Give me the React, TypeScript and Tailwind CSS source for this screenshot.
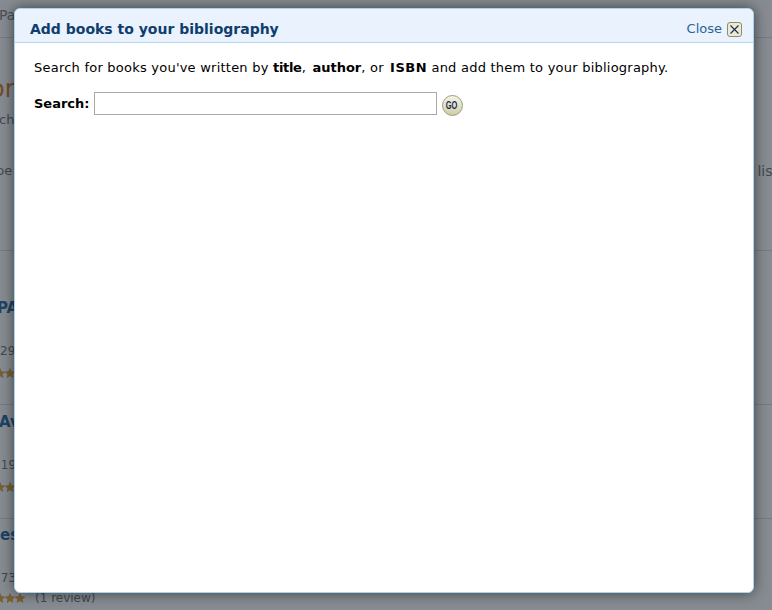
const font = "font-['DejaVu_Sans',Verdana,sans-serif]";

function Stars() {
  return (
    <div className="ml-[-25px] flex h-[10px] w-[50px] shrink-0">
      {Array.from({ length: 5 }).map((_, i) => (
        <svg key={i} viewBox="0 0 24 24" className="h-[10px] w-[10px] shrink-0 fill-[#e9a93a] stroke-[#b9852a]">
          <path d="M12 1l3.200 7.600 8.300.7-6.300 5.400 1.900 8.100L12 18.500 4.900 22.800l1.900-8.100L.5 9.300l8.300-.7z" />
        </svg>
      ))}
    </div>
  );
}

function BookRow({ title, titleClass, price, priceClass, first }: { title: string; titleClass: string; price: string; priceClass?: string; first?: boolean }) {
  return (
    <div className={`border-b border-[#ddd] ${first ? "h-[154px] pt-[40px]" : "h-[114px]"}`}>
      <div className={`h-[43px] pt-[7px] text-[15px] leading-[20px] font-bold text-[#2e6da4] ${titleClass}`}>{title}</div>
      <div className={`h-[22px] pt-[10px] text-[12px] leading-[14px] text-[#777] ${priceClass ?? ""}`}>{price}</div>
      <div className="mt-[12px]">
        <Stars />
      </div>
    </div>
  );
}

function Page() {
  return (
    <div className={`h-[610px] w-[772px] overflow-hidden bg-white ${font}`}>
      <div className="h-[38px] border-b border-[#ddd] pt-[5px] text-[14px] leading-[20px] text-[#888]">
        <span className="ml-[-1px]">Pa</span>
      </div>
      <div className="h-[213px] border-b border-[#ddd] pt-[36px]">
        <div className="ml-[-10px] h-[30px] text-[24px] leading-[30px] text-[#d9812f]">or</div>
        <div className="mt-[6px] ml-[-1px] text-[13px] leading-[20px] text-[#777]">ch</div>
        <div className="mt-[31px] flex justify-between text-[13px] leading-[20px] text-[#777]">
          <span className="ml-[-4px]">pe</span>
          <span className="mr-[-6px] text-[14px]">list</span>
        </div>
      </div>
      <BookRow first title="PA" titleClass="ml-[-3px]" price="29" />
      <BookRow title="Av" titleClass="ml-[-1px]" price=".19" priceClass="ml-[-3px]" />
      <div className="h-[43px] pt-[6px] text-[15px] leading-[20px] font-bold text-[#2e6da4]">es</div>
      <div className="ml-[-3px] h-[22px] pt-[9px] text-[12px] leading-[14px] text-[#777]">.73</div>
      <div className="mt-[7px] flex items-center">
        <Stars />
        <span className="ml-[10px] text-[12px] leading-[14px] text-[#777]">(1 review)</span>
      </div>
    </div>
  );
}

function CloseIcon() {
  return (
    <span className="flex h-[15px] w-[15px] items-center justify-center rounded-[3px] border border-[#8d8c6c] bg-[#ecebd2]">
      <svg viewBox="0 0 11 11" className="h-[11px] w-[11px] stroke-[#1b2a5c] stroke-[1.1]" fill="none">
        <path d="M1.500 1.500l8 8M9.500 1.500l-8 8" />
      </svg>
    </span>
  );
}

function GoButton() {
  return (
    <button className="flex h-[21px] w-[21px] items-center justify-center rounded-full border border-[#9c9b78] bg-gradient-to-b from-[#f6f5e4] to-[#cfcda8] font-['Liberation_Sans',sans-serif] text-[11px] font-bold text-[#1b2a5c]">
      <span className="inline-block scale-x-[0.68]">GO</span>
    </button>
  );
}

export default function App() {
  return (
    <div className="relative h-[610px] w-[772px] overflow-hidden">
      <Page />
      <div className="absolute inset-0 bg-[#0d1a24]/50" />
      <div
        className={`absolute top-[8px] left-[14px] h-[585px] w-[740px] overflow-hidden rounded-[6px] border border-[#a9d3ef] bg-white shadow-[0_0_14px_rgba(0,0,0,0.55)] ${font}`}
      >
        <div className="flex h-[34px] items-center justify-between border-b border-[#b5d8f0] bg-[#e9f2fd] pt-[8px] pr-[11px] pl-[15px]">
          <h1 className="text-[14px] font-bold text-[#0f3d6e]">Add books to your bibliography</h1>
          <div className="flex items-center gap-[5px]">
            <a className="mt-[-1px] text-[13px] text-[#2a6496]">Close</a>
            <CloseIcon />
          </div>
        </div>
        <div className="px-[19px] pt-[16px] text-[13px] text-black">
          <p className="leading-[18px] tracking-[0.23px]">
            Search for books you've written by <b className="tracking-[-0.3px]">title</b>,{" "}
            <b className="ml-[2px] tracking-normal">author</b>, or{" "}
            <b className="ml-[2px] tracking-[0.5px]">ISBN</b> and add them to your bibliography.
          </p>
          <div className="mt-[15px] flex items-start">
            <label className="mt-[2px] font-bold">Search:</label>
            <input className="ml-[4px] h-[23px] w-[343px] border border-[#a9a9a9] bg-white" />
            <span className="mt-[3px] ml-[5px]">
              <GoButton />
            </span>
          </div>
        </div>
      </div>
    </div>
  );
}
